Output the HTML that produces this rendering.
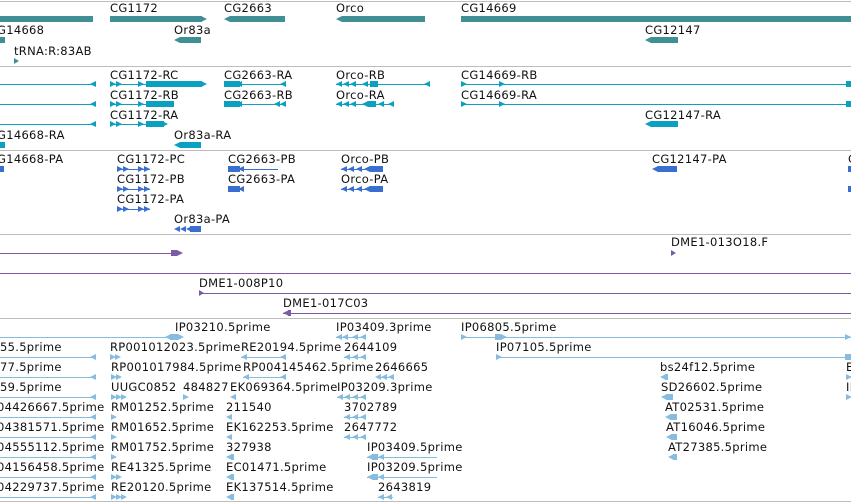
<!DOCTYPE html><html><head><meta charset="utf-8"><style>
body{margin:0;width:851px;height:502px;overflow:hidden;background:#fff;position:relative;font-family:"DejaVu Sans","Liberation Sans",sans-serif}
div{position:absolute}
.l{font-size:11.5px;letter-spacing:.3px;line-height:12px;white-space:nowrap;color:#111}
.s{left:0;width:851px;height:1px;background:#bdbdbd}
.h{height:1px}
.x{height:6px}
.ar{width:0;height:0;border-left:6px solid;border-top:3px solid transparent;border-bottom:3px solid transparent}
.al{width:0;height:0;border-right:6px solid;border-top:3px solid transparent;border-bottom:3px solid transparent}
.c1{background:#3f8f94;color:#3f8f94}.c2{background:#0aa0c0;color:#0aa0c0}.c3{background:#3a6fd0;color:#3a6fd0}.c4{background:#7b5aaa;color:#7b5aaa}.c5{background:#85bce0;color:#85bce0}
.ar,.al{background:none!important}
</style></head><body>
<div class="s" style="top:1px"></div>
<div class="s" style="top:66px"></div>
<div class="s" style="top:150px"></div>
<div class="s" style="top:234px"></div>
<div class="s" style="top:318px"></div>
<div class="s" style="top:501px"></div>

<!-- track 1 -->
<div class="l" style="left:110px;top:2px">CG1172</div>
<div class="l" style="left:224px;top:2px">CG2663</div>
<div class="l" style="left:336px;top:2px">Orco</div>
<div class="l" style="left:461px;top:2px">CG14669</div>
<div class="x c1" style="left:0;top:16px;width:93px"></div>
<div class="x c1" style="left:110px;top:16px;width:92px"></div><div class="ar c1" style="left:201px;top:16px"></div>
<div class="al c1" style="left:224px;top:16px"></div><div class="x c1" style="left:230px;top:16px;width:55px"></div>
<div class="al c1" style="left:336px;top:16px"></div><div class="x c1" style="left:342px;top:16px;width:83px"></div>
<div class="x c1" style="left:461px;top:16px;width:390px"></div>
<div class="l" style="left:-3px;top:24px">G14668</div>
<div class="x c1" style="left:0;top:37px;width:5px"></div>
<div class="l" style="left:174px;top:24px">Or83a</div>
<div class="al c1" style="left:174px;top:37px"></div><div class="x c1" style="left:180px;top:37px;width:21px"></div>
<div class="l" style="left:645px;top:24px">CG12147</div>
<div class="al c1" style="left:645px;top:37px"></div><div class="x c1" style="left:651px;top:37px;width:27px"></div>
<div class="l" style="left:14px;top:45px">tRNA:R:83AB</div>
<div class="ar c1" style="left:14px;top:58px;border-left-width:5px"></div>

<!-- track 2 -->
<div class="l" style="left:110px;top:69px">CG1172-RC</div>
<div class="l" style="left:224px;top:69px">CG2663-RA</div>
<div class="l" style="left:336px;top:69px">Orco-RB</div>
<div class="l" style="left:461px;top:69px">CG14669-RB</div>
<div class="h c2" style="left:0;top:84px;width:93px"></div><div class="al c2" style="left:90px;top:81px"></div>
<div class="h c2" style="left:110px;top:84px;width:40px"></div><div class="ar c2" style="left:110px;top:81px"></div><div class="ar c2" style="left:116px;top:81px"></div><div class="ar c2" style="left:138px;top:81px"></div>
<div class="x c2" style="left:146px;top:81px;width:56px"></div><div class="ar c2" style="left:201px;top:81px"></div>
<div class="x c2" style="left:224px;top:81px;width:16px"></div><div class="h c2" style="left:236px;top:84px;width:50px"></div><div class="al c2" style="left:236px;top:81px"></div><div class="al c2" style="left:280px;top:81px"></div>
<div class="h c2" style="left:336px;top:84px;width:94px"></div><div class="al c2" style="left:336px;top:81px"></div><div class="al c2" style="left:343px;top:81px"></div><div class="al c2" style="left:350px;top:81px"></div><div class="al c2" style="left:362px;top:81px"></div><div class="x c2" style="left:370px;top:81px;width:8px"></div><div class="al c2" style="left:424px;top:81px"></div>
<div class="h c2" style="left:461px;top:84px;width:390px"></div><div class="ar c2" style="left:461px;top:81px"></div><div class="ar c2" style="left:499px;top:81px"></div><div class="x c2" style="left:846px;top:81px;width:5px"></div>

<div class="l" style="left:110px;top:89px">CG1172-RB</div>
<div class="l" style="left:224px;top:89px">CG2663-RB</div>
<div class="l" style="left:336px;top:89px">Orco-RA</div>
<div class="l" style="left:461px;top:89px">CG14669-RA</div>
<div class="h c2" style="left:0;top:104px;width:93px"></div><div class="al c2" style="left:90px;top:101px"></div>
<div class="h c2" style="left:110px;top:104px;width:40px"></div><div class="ar c2" style="left:110px;top:101px"></div><div class="ar c2" style="left:116px;top:101px"></div><div class="ar c2" style="left:138px;top:101px"></div>
<div class="x c2" style="left:146px;top:101px;width:28px"></div>
<div class="x c2" style="left:224px;top:101px;width:16px"></div><div class="h c2" style="left:236px;top:104px;width:50px"></div><div class="al c2" style="left:236px;top:101px"></div><div class="al c2" style="left:274px;top:101px"></div><div class="al c2" style="left:280px;top:101px"></div>
<div class="h c2" style="left:336px;top:104px;width:58px"></div><div class="al c2" style="left:336px;top:101px"></div><div class="al c2" style="left:343px;top:101px"></div><div class="al c2" style="left:350px;top:101px"></div><div class="al c2" style="left:362px;top:101px"></div><div class="x c2" style="left:368px;top:101px;width:8px"></div><div class="al c2" style="left:378px;top:101px"></div><div class="al c2" style="left:388px;top:101px"></div>
<div class="h c2" style="left:461px;top:104px;width:390px"></div><div class="ar c2" style="left:461px;top:101px"></div><div class="ar c2" style="left:499px;top:101px"></div><div class="x c2" style="left:846px;top:101px;width:5px"></div>

<div class="l" style="left:110px;top:109px">CG1172-RA</div>
<div class="l" style="left:645px;top:109px">CG12147-RA</div>
<div class="h c2" style="left:0;top:124px;width:93px"></div><div class="al c2" style="left:90px;top:121px"></div>
<div class="h c2" style="left:110px;top:124px;width:40px"></div><div class="ar c2" style="left:110px;top:121px"></div><div class="ar c2" style="left:116px;top:121px"></div><div class="ar c2" style="left:138px;top:121px"></div>
<div class="x c2" style="left:146px;top:121px;width:18px"></div><div class="ar c2" style="left:162px;top:121px"></div>
<div class="al c2" style="left:645px;top:121px"></div><div class="x c2" style="left:651px;top:121px;width:27px"></div>
<div class="l" style="left:-3px;top:129px">G14668-RA</div>
<div class="l" style="left:174px;top:129px">Or83a-RA</div>
<div class="x c2" style="left:0;top:142px;width:5px"></div>
<div class="al c2" style="left:174px;top:142px"></div><div class="x c2" style="left:180px;top:142px;width:21px"></div>

<!-- track 3 -->
<div class="l" style="left:-3px;top:153px">G14668-PA</div>
<div class="l" style="left:117px;top:153px">CG1172-PC</div>
<div class="l" style="left:228px;top:153px">CG2663-PB</div>
<div class="l" style="left:341px;top:153px">Orco-PB</div>
<div class="l" style="left:652px;top:153px">CG12147-PA</div>
<div class="l" style="left:848px;top:153px">C</div>
<div class="x c3" style="left:0;top:166px;width:4px"></div>
<div class="h c3" style="left:117px;top:169px;width:33px"></div><div class="ar c3" style="left:117px;top:166px"></div><div class="ar c3" style="left:123px;top:166px"></div><div class="ar c3" style="left:138px;top:166px"></div><div class="ar c3" style="left:144px;top:166px"></div>
<div class="x c3" style="left:228px;top:166px;width:12px"></div><div class="h c3" style="left:236px;top:169px;width:42px"></div><div class="al c3" style="left:238px;top:166px"></div>
<div class="h c3" style="left:341px;top:169px;width:42px"></div><div class="al c3" style="left:341px;top:166px"></div><div class="al c3" style="left:348px;top:166px"></div><div class="al c3" style="left:356px;top:166px"></div><div class="al c3" style="left:364px;top:166px"></div><div class="x c3" style="left:370px;top:166px;width:13px"></div>
<div class="al c3" style="left:652px;top:166px"></div><div class="x c3" style="left:658px;top:166px;width:19px"></div>
<div class="x c3" style="left:848px;top:166px;width:3px"></div>
<div class="l" style="left:117px;top:173px">CG1172-PB</div>
<div class="l" style="left:228px;top:173px">CG2663-PA</div>
<div class="l" style="left:341px;top:173px">Orco-PA</div>
<div class="h c3" style="left:117px;top:189px;width:33px"></div><div class="ar c3" style="left:117px;top:186px"></div><div class="ar c3" style="left:123px;top:186px"></div><div class="ar c3" style="left:138px;top:186px"></div><div class="ar c3" style="left:144px;top:186px"></div>
<div class="x c3" style="left:228px;top:186px;width:12px"></div><div class="al c3" style="left:238px;top:186px"></div>
<div class="h c3" style="left:341px;top:189px;width:42px"></div><div class="al c3" style="left:341px;top:186px"></div><div class="al c3" style="left:348px;top:186px"></div><div class="al c3" style="left:356px;top:186px"></div><div class="al c3" style="left:364px;top:186px"></div><div class="x c3" style="left:370px;top:186px;width:13px"></div>
<div class="x c3" style="left:848px;top:186px;width:3px"></div>
<div class="l" style="left:117px;top:193px">CG1172-PA</div>
<div class="h c3" style="left:117px;top:209px;width:33px"></div><div class="ar c3" style="left:117px;top:206px"></div><div class="ar c3" style="left:123px;top:206px"></div><div class="ar c3" style="left:138px;top:206px"></div><div class="ar c3" style="left:144px;top:206px"></div>
<div class="l" style="left:174px;top:213px">Or83a-PA</div>
<div class="al c3" style="left:174px;top:226px"></div><div class="al c3" style="left:180px;top:226px"></div><div class="al c3" style="left:186px;top:226px"></div><div class="x c3" style="left:190px;top:226px;width:11px"></div>

<!-- track 4 -->
<div class="h c4" style="left:0;top:253px;width:175px"></div><div class="x c4" style="left:171px;top:250px;width:6px"></div><div class="ar c4" style="left:177px;top:250px"></div>
<div class="l" style="left:671px;top:236px">DME1-013O18.F</div>
<div class="ar c4" style="left:671px;top:250px;border-left-width:5px"></div>
<div class="h c4" style="left:0;top:273px;width:851px"></div>
<div class="l" style="left:199px;top:277px">DME1-008P10</div>
<div class="h c4" style="left:199px;top:293px;width:652px"></div><div class="ar c4" style="left:199px;top:290px;border-left-width:5px"></div>
<div class="l" style="left:283px;top:297px">DME1-017C03</div>
<div class="h c4" style="left:283px;top:313px;width:568px"></div><div class="al c4" style="left:283px;top:310px"></div><div class="x c4" style="left:288px;top:310px;width:3px"></div>

<!-- track 5 -->
<div class="l" style="left:175px;top:321px">IP03210.5prime</div>
<div class="l" style="left:336px;top:321px">IP03409.3prime</div>
<div class="l" style="left:461px;top:321px">IP06805.5prime</div>
<div class="h c5" style="left:0;top:337px;width:170px"></div><div class="al c5" style="left:165px;top:334px"></div><div class="x c5" style="left:170px;top:334px;width:8px"></div><div class="ar c5" style="left:178px;top:334px"></div>
<div class="h c5" style="left:336px;top:337px;width:30px"></div><div class="al c5" style="left:336px;top:334px"></div><div class="al c5" style="left:342px;top:334px"></div><div class="al c5" style="left:352px;top:334px"></div><div class="al c5" style="left:360px;top:334px"></div>
<div class="h c5" style="left:461px;top:337px;width:390px"></div><div class="ar c5" style="left:461px;top:334px"></div><div class="x c5" style="left:495px;top:334px;width:6px"></div><div class="ar c5" style="left:501px;top:334px"></div><div class="ar c5" style="left:845px;top:334px"></div>

<div class="l" style="left:0;top:341px">55.5prime</div>
<div class="l" style="left:110px;top:341px">RP001012023.5prime</div>
<div class="l" style="left:241px;top:341px">RE20194.5prime</div>
<div class="l" style="left:344px;top:341px">2644109</div>
<div class="l" style="left:496px;top:341px">IP07105.5prime</div>
<div class="h c5" style="left:0;top:357px;width:95px"></div><div class="al c5" style="left:90px;top:354px"></div>
<div class="ar c5" style="left:110px;top:354px"></div><div class="ar c5" style="left:115px;top:354px"></div>
<div class="h c5" style="left:241px;top:357px;width:45px"></div><div class="al c5" style="left:241px;top:354px"></div><div class="al c5" style="left:280px;top:354px"></div>
<div class="h c5" style="left:344px;top:357px;width:22px"></div><div class="al c5" style="left:344px;top:354px"></div><div class="al c5" style="left:352px;top:354px"></div><div class="al c5" style="left:360px;top:354px"></div>
<div class="h c5" style="left:496px;top:357px;width:355px"></div><div class="ar c5" style="left:496px;top:354px"></div><div class="x c5" style="left:845px;top:354px;width:6px"></div>

<div class="l" style="left:0;top:361px">77.5prime</div>
<div class="l" style="left:111px;top:361px">RP001017984.5prime</div>
<div class="l" style="left:243px;top:361px">RP004145462.5prime</div>
<div class="l" style="left:375px;top:361px">2646665</div>
<div class="l" style="left:660px;top:361px">bs24f12.5prime</div>
<div class="l" style="left:846px;top:361px">E</div>
<div class="h c5" style="left:0;top:377px;width:95px"></div><div class="al c5" style="left:90px;top:374px"></div>
<div class="ar c5" style="left:111px;top:374px"></div><div class="ar c5" style="left:116px;top:374px"></div>
<div class="h c5" style="left:243px;top:377px;width:43px"></div><div class="al c5" style="left:243px;top:374px"></div><div class="al c5" style="left:280px;top:374px"></div>
<div class="al c5" style="left:375px;top:374px"></div><div class="al c5" style="left:381px;top:374px"></div><div class="h c5" style="left:381px;top:377px;width:12px"></div><div class="al c5" style="left:388px;top:374px"></div>
<div class="al c5" style="left:660px;top:374px"></div><div class="x c5" style="left:665px;top:374px;width:3px"></div>
<div class="ar c5" style="left:846px;top:374px"></div>

<div class="l" style="left:0;top:381px">59.5prime</div>
<div class="l" style="left:111px;top:381px">UUGC0852</div>
<div class="l" style="left:183px;top:381px">484827</div>
<div class="l" style="left:230px;top:381px">EK069364.5prime</div>
<div class="l" style="left:337px;top:381px">IP03209.3prime</div>
<div class="l" style="left:661px;top:381px">SD26602.5prime</div>
<div class="l" style="left:846px;top:381px">II</div>
<div class="h c5" style="left:0;top:397px;width:95px"></div><div class="al c5" style="left:90px;top:394px"></div>
<div class="ar c5" style="left:111px;top:394px"></div><div class="ar c5" style="left:116px;top:394px"></div><div class="ar c5" style="left:121px;top:394px"></div>
<div class="ar c5" style="left:183px;top:394px"></div>
<div class="al c5" style="left:230px;top:394px"></div>
<div class="h c5" style="left:337px;top:397px;width:28px"></div><div class="al c5" style="left:337px;top:394px"></div><div class="al c5" style="left:344px;top:394px"></div><div class="al c5" style="left:352px;top:394px"></div><div class="al c5" style="left:360px;top:394px"></div>
<div class="al c5" style="left:661px;top:394px"></div><div class="x c5" style="left:666px;top:394px;width:7px"></div>
<div class="ar c5" style="left:846px;top:394px"></div>

<div class="l" style="left:-3px;top:401px">04426667.5prime</div>
<div class="l" style="left:111px;top:401px">RM01252.5prime</div>
<div class="l" style="left:226px;top:401px">211540</div>
<div class="l" style="left:344px;top:401px">3702789</div>
<div class="l" style="left:665px;top:401px">AT02531.5prime</div>
<div class="h c5" style="left:0;top:417px;width:95px"></div><div class="al c5" style="left:90px;top:414px"></div>
<div class="ar c5" style="left:111px;top:414px"></div>
<div class="al c5" style="left:226px;top:414px"></div>
<div class="h c5" style="left:344px;top:417px;width:22px"></div><div class="al c5" style="left:344px;top:414px"></div><div class="al c5" style="left:352px;top:414px"></div><div class="al c5" style="left:360px;top:414px"></div>
<div class="al c5" style="left:665px;top:414px"></div><div class="x c5" style="left:670px;top:414px;width:7px"></div>

<div class="l" style="left:-3px;top:421px">04381571.5prime</div>
<div class="l" style="left:111px;top:421px">RM01652.5prime</div>
<div class="l" style="left:226px;top:421px">EK162253.5prime</div>
<div class="l" style="left:344px;top:421px">2647772</div>
<div class="l" style="left:666px;top:421px">AT16046.5prime</div>
<div class="h c5" style="left:0;top:437px;width:95px"></div><div class="al c5" style="left:90px;top:434px"></div>
<div class="ar c5" style="left:111px;top:434px"></div>
<div class="al c5" style="left:226px;top:434px"></div>
<div class="h c5" style="left:344px;top:437px;width:22px"></div><div class="al c5" style="left:344px;top:434px"></div><div class="al c5" style="left:352px;top:434px"></div><div class="al c5" style="left:360px;top:434px"></div>
<div class="al c5" style="left:666px;top:434px"></div><div class="x c5" style="left:671px;top:434px;width:6px"></div>

<div class="l" style="left:-3px;top:441px">04555112.5prime</div>
<div class="l" style="left:111px;top:441px">RM01752.5prime</div>
<div class="l" style="left:226px;top:441px">327938</div>
<div class="l" style="left:367px;top:441px">IP03409.5prime</div>
<div class="l" style="left:668px;top:441px">AT27385.5prime</div>
<div class="h c5" style="left:0;top:457px;width:95px"></div><div class="al c5" style="left:90px;top:454px"></div>
<div class="ar c5" style="left:111px;top:454px"></div>
<div class="al c5" style="left:226px;top:454px"></div><div class="x c5" style="left:231px;top:454px;width:3px"></div>
<div class="h c5" style="left:367px;top:457px;width:70px"></div><div class="al c5" style="left:367px;top:454px"></div><div class="x c5" style="left:372px;top:454px;width:6px"></div><div class="al c5" style="left:378px;top:454px"></div>
<div class="al c5" style="left:668px;top:454px"></div><div class="x c5" style="left:673px;top:454px;width:4px"></div>

<div class="l" style="left:-3px;top:461px">04156458.5prime</div>
<div class="l" style="left:111px;top:461px">RE41325.5prime</div>
<div class="l" style="left:226px;top:461px">EC01471.5prime</div>
<div class="l" style="left:367px;top:461px">IP03209.5prime</div>
<div class="h c5" style="left:0;top:477px;width:95px"></div><div class="al c5" style="left:90px;top:474px"></div>
<div class="ar c5" style="left:111px;top:474px"></div><div class="ar c5" style="left:116px;top:474px"></div>
<div class="al c5" style="left:226px;top:474px"></div><div class="x c5" style="left:231px;top:474px;width:3px"></div>
<div class="h c5" style="left:367px;top:477px;width:70px"></div><div class="al c5" style="left:367px;top:474px"></div><div class="x c5" style="left:372px;top:474px;width:6px"></div><div class="al c5" style="left:378px;top:474px"></div>

<div class="l" style="left:-3px;top:481px">04229737.5prime</div>
<div class="l" style="left:111px;top:481px">RE20120.5prime</div>
<div class="l" style="left:226px;top:481px">EK137514.5prime</div>
<div class="l" style="left:378px;top:481px">2643819</div>
<div class="h c5" style="left:0;top:497px;width:95px"></div><div class="al c5" style="left:90px;top:494px"></div>
<div class="ar c5" style="left:111px;top:494px"></div><div class="ar c5" style="left:116px;top:494px"></div><div class="ar c5" style="left:121px;top:494px"></div>
<div class="al c5" style="left:226px;top:494px"></div><div class="x c5" style="left:231px;top:494px;width:3px"></div>
<div class="h c5" style="left:378px;top:497px;width:15px"></div><div class="al c5" style="left:378px;top:494px"></div><div class="al c5" style="left:386px;top:494px"></div>
</body></html>
